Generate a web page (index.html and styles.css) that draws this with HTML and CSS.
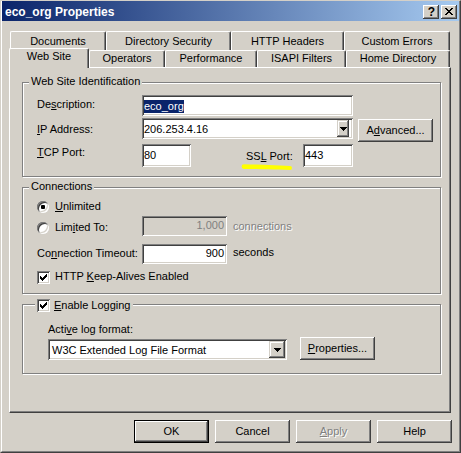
FILE: index.html
```html
<!DOCTYPE html>
<html>
<head>
<meta charset="utf-8">
<title>eco_org Properties</title>
<link rel="stylesheet" href="styles.css">
</head>
<body>
<div class="window">
  <div class="frame">
    <div class="titlebar">
      <span class="title">eco_org Properties</span>
      <div class="cbtns">
        <div class="btn cbtn qm">?</div>
        <div class="btn cbtn">
          <svg width="16" height="14" viewBox="0 0 16 14"><path d="M4 3h2v1h-2zM10 3h2v1h-2zM5 4h2v1h-2zM9 4h2v1h-2zM6 5h4v1h-4zM7 6h2v1h-2zM6 7h4v1h-4zM5 8h2v1h-2zM9 8h2v1h-2zM4 9h2v1h-2zM10 9h2v1h-2z" fill="#000"/></svg>
        </div>
      </div>
    </div>

    <div class="tabs">
      <div class="tabrow back">
        <div class="tab t-doc">Documents</div>
        <div class="tab t-ds">Directory Security</div>
        <div class="tab t-http">HTTP Headers</div>
        <div class="tab t-ce">Custom Errors</div>
      </div>
      <div class="tabrow front">
        <div class="tab sel t-web">Web Site</div>
        <div class="tab t-ops">Operators</div>
        <div class="tab t-perf">Performance</div>
        <div class="tab t-isapi">ISAPI Filters</div>
        <div class="tab t-home">Home Directory</div>
      </div>
    </div>

    <div class="panel">
      <div class="group g1">
        <div class="legend">Web Site Identification</div>
        <div class="row r-desc">
          <div class="col lbl-desc">De<u>s</u>cription:</div>
          <div class="edit e-desc"><span class="hl">eco_org</span></div>
        </div>
        <div class="row r-ip">
          <div class="col lbl-ip"><u>I</u>P Address:</div>
          <div class="edit combo e-ip">
            <span class="val">206.253.4.16</span>
            <div class="btn dd dd-ip"><svg width="7" height="4" viewBox="0 0 7 4"><path d="M0 0h7v1h-1v1h-1v1h-1v1h-1v-1h-1v-1h-1v-1h-1z" fill="#000"/></svg></div>
          </div>
          <div class="btn adv">A<u>d</u>vanced...</div>
        </div>
        <div class="row r-tcp">
          <div class="col lbl-tcp"><u>T</u>CP Port:</div>
          <div class="edit e-tcp">80</div>
          <div class="ssl">SS<u>L</u> Port:
            <svg class="marker" width="54" height="10" viewBox="0 0 54 10"><path d="M4 2.2C20 2.6 38 3.4 50 4a2 2 0 0 1 0 4C38 7.6 20 7.2 4 7a2.4 2.4 0 0 1 0-4.8z" fill="#ffff00"/></svg>
          </div>
          <div class="edit e-ssl">443</div>
        </div>
      </div>

      <div class="group g2">
        <div class="legend">Connections</div>
        <div class="row r-unl">
          <div class="lead">
            <div class="radio"><span class="dot"></span></div>
            <span class="rlbl"><u>U</u>nlimited</span>
          </div>
        </div>
        <div class="row r-lim">
          <div class="lead">
            <div class="radio"></div>
            <span class="rlbl">Lim<u>i</u>ted To:</span>
          </div>
          <div class="edit num e-lim">1,000</div>
          <span class="unit disabled">connections</span>
        </div>
        <div class="row r-to">
          <div class="col lbl-to">Co<u>n</u>nection Timeout:</div>
          <div class="edit num e-to">900</div>
          <span class="unit u-sec">seconds</span>
        </div>
        <div class="row r-ka">
          <div class="check"><svg width="13" height="13" viewBox="0 0 13 13"><path d="M3 5h1v3h-1zM4 6h1v3h-1zM5 7h1v3h-1zM6 6h1v3h-1zM7 5h1v3h-1zM8 4h1v3h-1zM9 3h1v3h-1z" fill="#000"/></svg></div>
          <span class="clbl">HTTP <u>K</u>eep-Alives Enabled</span>
        </div>
      </div>

      <div class="group g3">
        <div class="legend chk">
          <div class="check"><svg width="13" height="13" viewBox="0 0 13 13"><path d="M3 5h1v3h-1zM4 6h1v3h-1zM5 7h1v3h-1zM6 6h1v3h-1zM7 5h1v3h-1zM8 4h1v3h-1zM9 3h1v3h-1z" fill="#000"/></svg></div>
          <span class="clbl-log"><u>E</u>nable Logging</span>
        </div>
        <div class="lbl-fmt">Acti<u>v</u>e log format:</div>
        <div class="row r-log">
          <div class="edit combo e-log">
            <span class="val">W3C Extended Log File Format</span>
            <div class="btn dd dd-log"><svg width="7" height="4" viewBox="0 0 7 4"><path d="M0 0h7v1h-1v1h-1v1h-1v1h-1v-1h-1v-1h-1v-1h-1z" fill="#000"/></svg></div>
          </div>
          <div class="btn props"><u>P</u>roperties...</div>
        </div>
      </div>
    </div>

    <div class="actions">
      <div class="btn act def">OK</div>
      <div class="btn act">Cancel</div>
      <div class="btn act disabled"><u>A</u>pply</div>
      <div class="btn act">Help</div>
    </div>
  </div>
</div>
</body>
</html>
```

FILE: styles.css
```css
* { box-sizing: border-box; }

body {
  margin: 0;
  background: #d4d0c8;
  font-family: "Liberation Sans", Arial, sans-serif;
  font-size: 11px;
  line-height: 13px;
  color: #000;
}

u {
  text-decoration: underline;
  text-decoration-thickness: 1px;
  text-underline-offset: 1px;
}

.window {
  width: 461px;
  height: 453px;
  border-style: solid;
  border-width: 1px;
  border-color: #d4d0c8 #404040 #404040 #d4d0c8;
  background: #d4d0c8;
}

.frame {
  height: 100%;
  border-left: 1px solid #fff;
  border-right: 1px solid #808080;
  border-bottom: 1px solid #808080;
  display: flex;
  flex-direction: column;
}
.frame > * { flex: none; }

/* title bar */
.titlebar {
  height: 20px;
  background: linear-gradient(to right, #0a246a, #a6caf0);
  display: flex;
  align-items: flex-start;
  padding: 0 2px 0 3px;
}
.title {
  flex: 1;
  color: #fff;
  font-weight: bold;
  font-size: 12px;
  line-height: 22px;
  white-space: nowrap;
}
.cbtns {
  display: flex;
  gap: 2px;
  margin-top: 4px;
}
.cbtn {
  width: 16px;
  height: 14px;
}
.cbtn svg { display: block; }
.qm {
  font-weight: bold;
  font-size: 12px;
  line-height: 14px;
  padding-left: 1px;
}

/* generic raised button */
.btn {
  background: #d4d0c8;
  box-shadow: inset -1px -1px #404040, inset 1px 1px #fff, inset -2px -2px #808080;
  display: flex;
  align-items: center;
  justify-content: center;
  white-space: nowrap;
}

/* tabs */
.tabs { margin-top: 10px; }
.tabrow { display: flex; }
.tabrow.back { height: 19px; margin-left: 8px; }
.tabrow.front { height: 17px; margin-left: 7px; align-items: flex-start; }

.tab {
  height: 100%;
  flex: none;
  background: #d4d0c8;
  border-top: 1px solid #fff;
  border-left: 1px solid #fff;
  border-right: 1px solid #404040;
  box-shadow: inset -1px 0 #808080;
  border-radius: 2px 2px 0 0;
  text-align: center;
  white-space: nowrap;
}
.back .tab { padding-top: 3px; }
.front .tab { padding-top: 1px; }
.tab.sel {
  height: 20px;
  margin-top: -2px;
  position: relative;
  z-index: 1;
}

.t-doc { width: 96px; }
.t-ds { width: 125px; }
.t-http { width: 113px; }
.t-ce { width: 106px; }
.t-web { width: 80px; }
.t-ops { width: 76px; }
.t-perf { width: 92px; }
.t-isapi { width: 89px; }
.t-home { width: 104px; }

/* panel */
.panel {
  margin-left: 7px;
  width: 442px;
  height: 346px;
  border-style: solid;
  border-width: 1px;
  border-color: #fff #404040 #404040 #fff;
  box-shadow: inset -1px -1px #808080;
  padding: 14px 0 0 12px;
  display: flex;
  flex-direction: column;
}

.group {
  flex: none;
  width: 419px;
  border: 1px solid #808080;
  box-shadow: inset 1px 1px #fff, 1px 1px #fff;
  display: flex;
  flex-direction: column;
}
.g1 { height: 95px; }
.g2 { height: 107px; margin-top: 10px; }
.g3 { height: 70px; margin-top: 10px; }

.legend {
  align-self: flex-start;
  height: 13px;
  margin: -8px 0 -5px 6px;
  padding: 0 2px;
  background: #d4d0c8;
  white-space: nowrap;
}
.legend.chk {
  display: flex;
  align-items: flex-start;
  margin: -6px 0 -7px 12px;
  padding: 0 3px 0 2px;
}

.row {
  flex: none;
  display: flex;
  align-items: flex-start;
}
.col {
  flex: none;
  width: 105px;
  margin-left: 14px;
  white-space: nowrap;
}

/* edits */
.edit {
  flex: none;
  background: #fff;
  box-shadow: inset 1px 1px #808080, inset -1px -1px #fff, inset 2px 2px #404040, inset -2px -2px #d4d0c8;
  padding: 5px 2px 0 2px;
  white-space: nowrap;
  overflow: hidden;
}
.edit.num {
  padding: 3px 3px 0 2px;
  text-align: right;
}
.combo {
  display: flex;
  align-items: flex-start;
  padding: 2px;
}
.combo .val {
  flex: 1;
  padding-top: 3px;
}
.dd {
  flex: none;
  height: 17px;
  box-shadow: inset -1px -1px #404040, inset 1px 1px #d4d0c8, inset -2px -2px #808080, inset 2px 2px #fff;
}
.dd svg { display: block; }
.dd-ip { width: 12px; margin-right: 2px; }
.dd-log { width: 16px; }

.hl {
  background: #0a246a;
  color: #fff;
  display: inline-block;
  height: 13px;
}

/* group 1 rows */
.r-desc { margin-top: 12px; height: 21px; }
.r-ip { margin-top: 2px; height: 21px; }
.r-tcp { margin-top: 5px; height: 23px; }
.lbl-desc { margin-top: 3px; }
.lbl-ip { margin-top: 5px; }
.lbl-tcp { margin-top: 2px; }
.e-desc { width: 211px; height: 21px; }
.e-ip { width: 211px; height: 21px; }
.adv { width: 75px; height: 23px; margin-left: 5px; margin-top: 1px; }
.e-tcp { width: 49px; height: 23px; }
.ssl {
  flex: none;
  width: 57px;
  margin-left: 55px;
  margin-top: 6px;
  white-space: nowrap;
  position: relative;
}
.marker {
  position: absolute;
  left: -6px;
  top: 12px;
}
.e-ssl { width: 50px; height: 23px; }

/* group 2 rows */
.r-unl { margin-top: 12px; height: 13px; }
.r-lim { margin-top: 3px; height: 20px; }
.r-to { margin-top: 8px; height: 20px; }
.r-ka { margin-top: 6px; height: 14px; }

.lead {
  flex: none;
  width: 105px;
  margin-left: 14px;
  display: flex;
  align-items: flex-start;
}
.radio {
  flex: none;
  width: 12px;
  height: 12px;
  margin-top: 1px;
  border-radius: 50%;
  background: #fff;
  box-shadow: inset 1px 1px #808080, inset -1px -1px #fff, inset 2px 2px #404040, inset -2px -2px #d4d0c8;
  display: flex;
  align-items: center;
  justify-content: center;
}
.dot {
  width: 4px;
  height: 4px;
  border-radius: 1px;
  background: #000;
}
.rlbl { margin-left: 6px; white-space: nowrap; }
.r-lim .radio { margin-top: 6px; }
.r-lim .rlbl { margin-top: 5px; }

.e-lim { width: 85px; height: 20px; background: #d4d0c8; color: #808080; }
.e-to { width: 85px; height: 20px; }
.lbl-to { margin-top: 3px; }
.unit { margin-left: 6px; margin-top: 4px; white-space: nowrap; }
.u-sec { margin-top: 2px; }

.disabled {
  color: #808080;
  text-shadow: 1px 1px #fff;
}

.check {
  flex: none;
  width: 13px;
  height: 13px;
  background: #fff;
  box-shadow: inset 1px 1px #808080, inset -1px -1px #fff, inset 2px 2px #404040, inset -2px -2px #d4d0c8;
}
.check svg { display: block; }
.r-ka .check { margin-left: 14px; margin-top: 1px; }
.clbl { margin-left: 5px; white-space: nowrap; }
.clbl-log { margin-left: 4px; white-space: nowrap; }

/* group 3 */
.lbl-fmt {
  margin-left: 25px;
  margin-top: 18px;
  white-space: nowrap;
}
.r-log { margin-top: 1px; height: 23px; }
.e-log { width: 239px; height: 21px; margin-left: 25px; margin-top: 2px; }
.e-log .val { padding-left: 2px; }
.props { width: 75px; height: 23px; margin-left: 13px; }

/* dialog buttons */
.actions {
  display: flex;
  justify-content: flex-end;
  gap: 6px;
  margin-top: 7px;
  padding-right: 7px;
}
.act { width: 75px; height: 23px; }
.def {
  border: 1px solid #000;
}
```
